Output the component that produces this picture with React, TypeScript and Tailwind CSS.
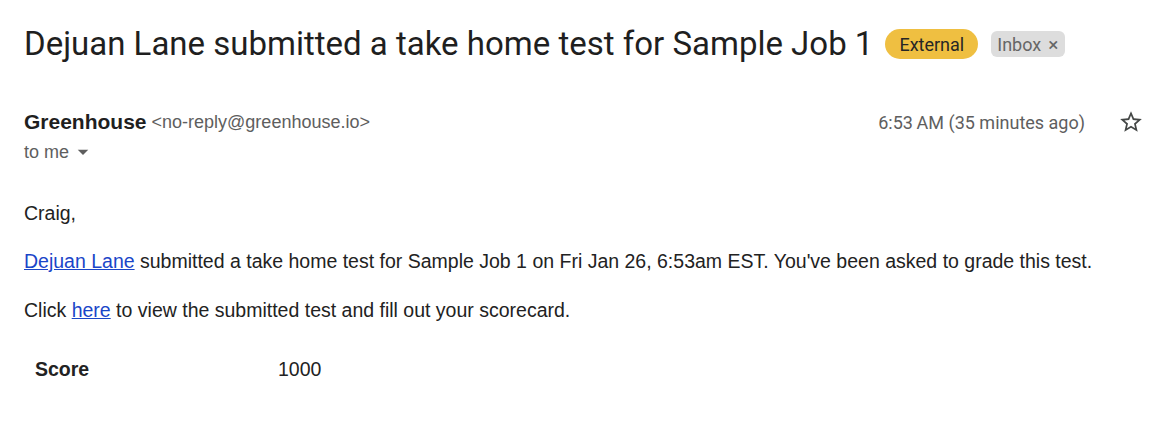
import React from "react";

function StarIcon() {
  return (
    <svg width="26" height="26" viewBox="0 0 24 24" className="text-[#444746]">
      <path
        fill="currentColor"
        d="M22 9.24l-7.19-.62L12 2 9.19 8.63 2 9.24l5.46 4.73L5.82 21 12 17.27 18.18 21l-1.63-7.03L22 9.24zM12 15.4l-3.76 2.27 1-4.28-3.32-2.88 4.38-.38L12 6.1l1.71 4.04 4.38.38-3.32 2.88 1 4.28L12 15.4z"
      />
    </svg>
  );
}

export default function App() {
  return (
    <div className="h-[432px] w-[1159px] overflow-hidden bg-white font-['Liberation_Sans',Arial,sans-serif]">
      <div className="flex items-center pl-[24px] pt-[24px]">
        <h1 className="font-['Roboto',sans-serif] text-[33px] font-normal leading-[40px] text-[#1f1f1f]">
          Dejuan Lane submitted a take home test for Sample Job 1
        </h1>
        <span className="ml-[12px] inline-flex h-[30px] items-center rounded-full bg-[#efbf41] px-[14px] font-['Roboto',sans-serif] text-[18px] text-[#262626]">
          External
        </span>
        <span className="ml-[13px] inline-flex h-[26px] items-center rounded-[6px] bg-[#dddddd] pl-[6px] pr-[7px] font-['Roboto',sans-serif] text-[18px] text-[#666666]">
          Inbox
          <span className="ml-[7px] text-[19px] leading-none text-[#666666]">×</span>
        </span>
      </div>

      <div className="mt-[44px] flex items-start pl-[24px] pr-[15px]">
        <div className="flex-1">
          <div className="flex h-[28px] items-center">
            <span className="text-[21px] font-bold text-[#1f1f1f]">Greenhouse</span>
            <span className="ml-[5px] text-[18px] text-[#5e5e5e]">&lt;no-reply@greenhouse.io&gt;</span>
          </div>
          <div className="mt-[4px] flex h-[24px] items-center text-[18px] text-[#5e5e5e]">
            to me
            <svg width="14" height="14" viewBox="0 0 12 12" className="ml-[7px]">
              <path d="M1.5 4h9L6 8.5z" fill="#5e5e5e" />
            </svg>
          </div>
        </div>
        <div className="flex h-[28px] items-center">
          <span className="font-['Roboto',sans-serif] text-[18px] text-[#5e5e5e]">6:53&#8201;AM (35 minutes ago)</span>
          <span className="ml-[33px] flex">
            <StarIcon />
          </span>
        </div>
      </div>

      <div className="mt-[37px] pl-[24px] text-[19.5px] leading-[24px] text-[#222222]">
        <p>Craig,</p>
        <p className="mt-[24px]">
          <a className="text-[#1a45c8] underline">Dejuan Lane</a> submitted a take home test for Sample Job 1 on Fri Jan 26, 6:53am EST. You've been asked to grade this test.
        </p>
        <p className="mt-[25px]">
          Click <a className="text-[#1a45c8] underline">here</a> to view the submitted test and fill out your scorecard.
        </p>
        <div className="mt-[35px] flex">
          <span className="w-[254px] pl-[11px] font-bold">Score</span>
          <span>1000</span>
        </div>
      </div>
    </div>
  );
}
